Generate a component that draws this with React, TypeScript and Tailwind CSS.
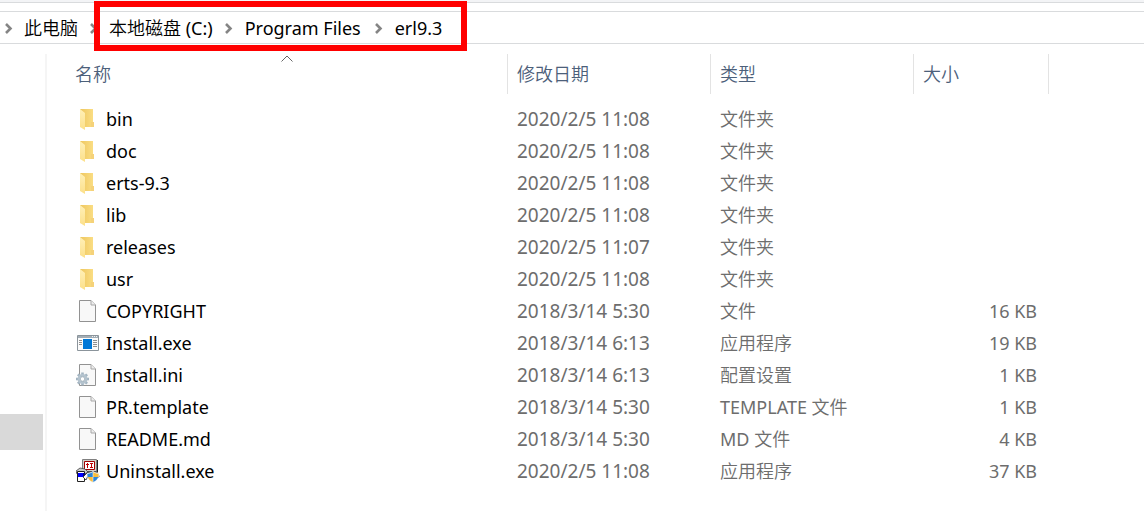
import React from "react";

type Kind = "folder" | "file" | "app" | "ini" | "uninstall";
type Entry = { name: string; date: string; type: string; size?: string; kind: Kind };

const entries: Entry[] = [
  { name: "bin", date: "2020/2/5 11:08", type: "文件夹", kind: "folder" },
  { name: "doc", date: "2020/2/5 11:08", type: "文件夹", kind: "folder" },
  { name: "erts-9.3", date: "2020/2/5 11:08", type: "文件夹", kind: "folder" },
  { name: "lib", date: "2020/2/5 11:08", type: "文件夹", kind: "folder" },
  { name: "releases", date: "2020/2/5 11:07", type: "文件夹", kind: "folder" },
  { name: "usr", date: "2020/2/5 11:08", type: "文件夹", kind: "folder" },
  { name: "COPYRIGHT", date: "2018/3/14 5:30", type: "文件", size: "16 KB", kind: "file" },
  { name: "Install.exe", date: "2018/3/14 6:13", type: "应用程序", size: "19 KB", kind: "app" },
  { name: "Install.ini", date: "2018/3/14 6:13", type: "配置设置", size: "1 KB", kind: "ini" },
  { name: "PR.template", date: "2018/3/14 5:30", type: "TEMPLATE 文件", size: "1 KB", kind: "file" },
  { name: "README.md", date: "2018/3/14 5:30", type: "MD 文件", size: "4 KB", kind: "file" },
  { name: "Uninstall.exe", date: "2020/2/5 11:08", type: "应用程序", size: "37 KB", kind: "uninstall" },
];

function Page() {
  return (
    <>
      <path d="M3.5 1.5h11.500l4.500 4.500v16.500h-16z" fill="#f8f8f8" stroke="#929292" />
      <path d="M15 1.500v4.500h4.500" fill="#ededed" stroke="#a8a8a8" />
    </>
  );
}

const gearTeeth = [0, 45, 90, 135, 180, 225, 270, 315];

function FileIcon({ kind }: { kind: Kind }) {
  return (
    <svg width="24" height="24" viewBox="0 0 24 24" className="block shrink-0" aria-hidden="true">
      {kind === "folder" && (
        <>
          <defs>
            <linearGradient id="folder-back" x1="0" y1="0" x2="1" y2="0">
              <stop offset="0" stopColor="#eec65e" />
              <stop offset="1" stopColor="#fbdf86" />
            </linearGradient>
            <linearGradient id="folder-flap" x1="0" y1="0" x2="0" y2="1">
              <stop offset="0" stopColor="#fff0b8" />
              <stop offset="1" stopColor="#fce08a" />
            </linearGradient>
          </defs>
          <path d="M4 2h13v13h1v5H8z" fill="url(#folder-back)" />
          <path d="M15 15h3v5h-3z" fill="#f5d27a" />
          <path d="M4 2l5 4v17l-5-3z" fill="url(#folder-flap)" />
        </>
      )}
      {kind === "file" && <Page />}
      {kind === "app" && (
        <>
          <path d="M1.500 4.500h21v15h-21z" fill="#fbfbfb" stroke="#8b949b" />
          <path d="M2 5h20v2H2z" fill="#a3adb5" />
          <path d="M16 5.500h1M18 5.500h1M20 5.500h1" stroke="#eef1f3" />
          <path d="M7 8h9v10H7z" fill="#0078d7" />
          <path d="M3 9.500h3M3 11.500h3M3 13.500h3M17 9.500h4M17 11.500h4M17 13.500h4M17 15.500h4" stroke="#8f8f8f" />
        </>
      )}
      {kind === "ini" && (
        <>
          <Page />
          {gearTeeth.map((a) => (
            <path key={a} d="M5.200 9.500h2.600v3h-2.600z" fill="#a3b4c1" transform={`rotate(${a} 6.500 16)`} />
          ))}
          <circle cx="6.500" cy="16" r="3.600" fill="#f8f8f8" stroke="#b4c3ce" strokeWidth="2.600" />
          <circle cx="6.500" cy="16" r="2.200" fill="#fff" stroke="#8798a5" strokeWidth=".6" />
        </>
      )}
      {kind === "uninstall" && (
        <>
          <path d="M6.500.5h14v12h-14z" fill="#d4d0c8" stroke="#808080" />
          <path d="M21.500 1v12H8" fill="none" stroke="#222" />
          <path d="M8.500 2.500h10v8h-10z" fill="#fff" stroke="#a00000" />
          <path d="M10 5.500h3M11.500 4v5M14 4.500h3M14 8.500h3M15.500 4v5" stroke="#c00000" />
          <path d="M9 14h13l1 4H9z" fill="#c0c0c0" stroke="#333" />
          <path d="M0 12l4-3 5 1 3 3-3 2H1z" fill="#c9c9c9" stroke="#444" strokeWidth=".8" />
          <path d="M1.500 12.500h7v10h-7z" fill="#fff" stroke="#222" />
          <path d="M2 14h5v4H2z" fill="#00f" />
          <path d="M7 14h2v4H7z" fill="#000080" />
          <path d="M7 18l4-4 2 1-3 6z" fill="#fff" stroke="#222" strokeWidth=".8" />
          <path d="M17 12c2 1.500 4 2 6 2 .5 5-2 8-6 10-4-2-6.500-5-6-10 2 0 4-.5 6-2z" fill="#eef4f8" />
          <path d="M16.700 13v5h-5c-.3-1-.4-2-.3-3.200 2 0 3.800-.6 5.300-1.800z" fill="#2b86d9" />
          <path d="M17.300 18h5c-.8 2.300-2.600 4-5 5z" fill="#2b86d9" />
          <path d="M17.300 13c1.500 1.200 3.300 1.800 5.300 1.800.1 1.200 0 2.200-.3 3.200h-5zM11.700 18h5v5c-2.400-1-4.200-2.700-5-5z" fill="#f9bd3b" />
        </>
      )}
    </svg>
  );
}

function Chevron() {
  return (
    <svg width="8" height="12" viewBox="0 0 8 12" className="block shrink-0" aria-hidden="true">
      <path d="M1 2L5.500 6.500L1 11" fill="none" stroke="#858585" strokeWidth="2.600" />
    </svg>
  );
}

/* Chinese runs are set a little lighter than the Latin runs beside them. */
function Mixed({ text }: { text: string }) {
  return (
    <>
      {text.split(/([\x21-\x7e]+)/).map((part, i) => (
        <span key={i} className={i % 2 === 1 ? "font-normal" : "font-[350]"}>
          {part}
        </span>
      ))}
    </>
  );
}

const crumb = "whitespace-nowrap text-black";
const columnHead = "border-r border-[#e3e3e3] p-0 pl-[9px] font-[350]";

export default function App() {
  return (
    <div className="flex min-h-screen flex-col bg-white font-['Noto_Sans','Noto_Sans_CJK_SC',sans-serif] text-lg leading-8">
      <header className="relative">
        <div className="h-[3px] border-b border-[#d9dbdd] bg-[#f3f4f6]" />
        <nav aria-label="地址" className="mt-2 flex h-[33px] items-center border-y border-[#d9dbdd] pl-[5px]">
          <Chevron />
          <a href="#pc" className={`${crumb} ml-[11px]`}><Mixed text="此电脑" /></a>
          <span className="ml-3"><Chevron /></span>
          <a href="#c" className={`${crumb} ml-[11px]`}><Mixed text="本地磁盘 (C:)" /></a>
          <span className="ml-3"><Chevron /></span>
          <a href="#program-files" className={`${crumb} ml-3`}>Program Files</a>
          <span className="ml-[14px]"><Chevron /></span>
          <a href="#erl" className={`${crumb} ml-3`}>erl9.3</a>
        </nav>
        <div className="pointer-events-none absolute top-px left-[94px] h-[50px] w-[373px] border-6 border-[#ff0000]" />
      </header>
      <div className="flex grow pt-[10px]">
        <aside className="w-[47px] shrink-0 border-r-2 border-[#f5f5f5] pt-[360px]">
          <div className="mr-[2px] h-9 bg-[#d9d9d9]" />
        </aside>
        <main className="grow">
          <table className="w-full table-fixed border-separate border-spacing-0 text-left">
            <colgroup>
              <col className="w-[461px]" />
              <col className="w-[203px]" />
              <col className="w-[203px]" />
              <col className="w-[135px]" />
              <col />
            </colgroup>
            <thead>
              <tr className="h-10 text-[#4c607a]">
                <th className="relative border-r border-[#e3e3e3] p-0 pl-7 font-[350]">
                  名称
                  <svg width="12" height="7" viewBox="0 0 12 7" className="absolute top-px left-[234px]" aria-hidden="true">
                    <path d="M.5 6.500L6 1l5.500 5.500" fill="none" stroke="#666" />
                  </svg>
                </th>
                <th className={columnHead}>修改日期</th>
                <th className={columnHead}>类型</th>
                <th className={columnHead}>大小</th>
                <td />
              </tr>
            </thead>
            <tbody className="text-[#6d6d6d] before:block before:h-[9px]">
              {entries.map((e) => (
                <tr key={e.name} className="h-8">
                  <td className="p-0 pl-[29px] text-black">
                    <div className="flex items-center gap-[6px]">
                      <FileIcon kind={e.kind} />
                      <span>{e.name}</span>
                    </div>
                  </td>
                  <td className="p-0 pl-[9px] text-[19px] leading-8">{e.date}</td>
                  <td className="p-0 pl-[9px]"><Mixed text={e.type} /></td>
                  <td className="p-0 pr-3 text-right">{e.size}</td>
                  <td />
                </tr>
              ))}
            </tbody>
          </table>
        </main>
      </div>
    </div>
  );
}
